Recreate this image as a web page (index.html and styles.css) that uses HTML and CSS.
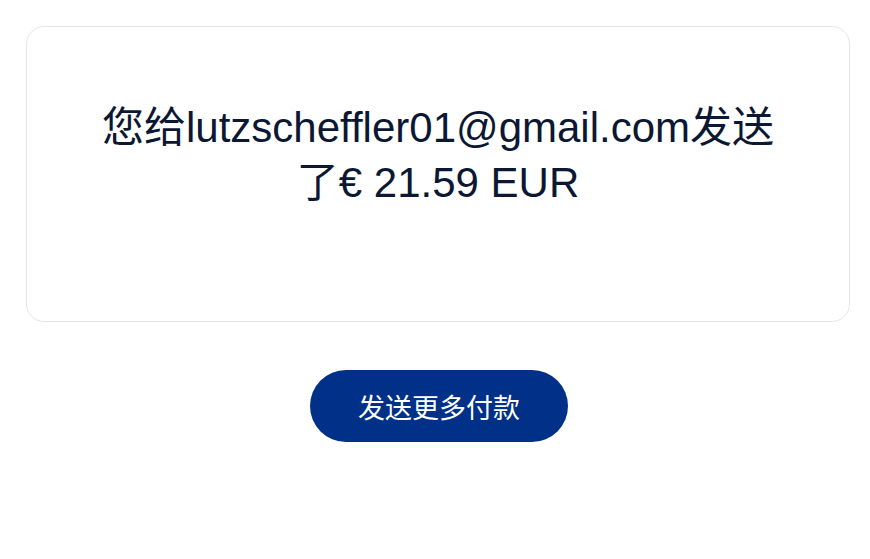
FILE: index.html
```html
<!DOCTYPE html>
<html lang="zh">
<head>
    <meta charset="UTF-8">
    <meta name="viewport" content="width=device-width, initial-scale=1.0">
    <title>付款已发送</title>
    <link rel="stylesheet" href="styles.css">
</head>
<body>

    <!-- Confirmation Card -->
    <div class="card">
        <p class="message">您给lutzscheffler01@gmail.com发送了€ 21.59 EUR</p>
    </div>

    <!-- Action -->
    <div class="actions">
        <button class="send-more">发送更多付款</button>
    </div>

</body>
</html>
```

FILE: styles.css
```css
* {
    margin: 0;
    padding: 0;
    box-sizing: border-box;
    font-family: "Liberation Sans", "Noto Sans CJK SC", sans-serif;
}

body {
    background: #ffffff;
    padding: 26px 20px 0 26px;
}

/* Confirmation Card */
.card {
    border: 1px solid #e6e6e6;
    border-radius: 18px;
    padding: 73px 60px 110px;
    height: 296px;
}

.message {
    font-size: 42px;
    line-height: 55px;
    color: #0b1733;
    text-align: center;
}

/* Action */
.actions {
    display: flex;
    justify-content: center;
    margin-top: 48px;
    padding-left: 2px;
}

.send-more {
    width: 258px;
    height: 72px;
    border: none;
    border-radius: 36px;
    background: #003087;
    color: #ffffff;
    font-size: 27px;
    cursor: pointer;
}
```
